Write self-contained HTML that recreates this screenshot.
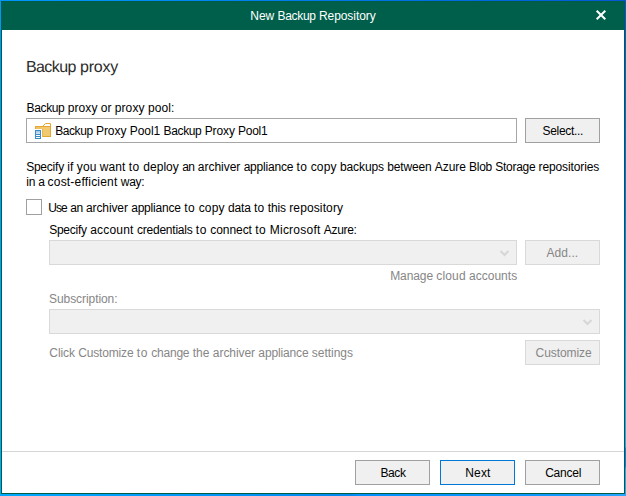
<!DOCTYPE html>
<html>
<head>
<meta charset="utf-8">
<title>New Backup Repository</title>
<style>
html,body{margin:0;padding:0;}
body{width:626px;height:496px;overflow:hidden;background:#0096ff;font-family:"Liberation Sans",sans-serif;position:relative;}
.abs{position:absolute;box-sizing:border-box;}
.t{position:absolute;white-space:nowrap;line-height:16px;height:16px;font-family:"Liberation Sans",sans-serif;}
.btn{position:absolute;box-sizing:border-box;background:#f0f0f0;border:1px solid #a0a0a0;}
.btn.dis{background:#f0f0f0;border-color:#d9d9d9;}
.combo{position:absolute;box-sizing:border-box;background:#f0f0f0;border:1px solid #d9d9d9;}
</style>
</head>
<body>
<!-- outer OS accent frame (desktop showing around window) -->
<div class="abs" style="left:0;top:0;width:626px;height:1px;background:linear-gradient(to right,#0096ff 0%,#0090f8 16%,#0070e8 64%,#0558d8 100%);"></div>
<div class="abs" style="left:0;top:1px;width:1px;height:495px;background:linear-gradient(to bottom,#0096ff 0%,#00aaff 100%);"></div>
<div class="abs" style="left:625px;top:1px;width:1px;height:495px;background:linear-gradient(to bottom,#0558d8 0%,#0558d8 8%,#0a6cf8 40%,#0090ff 57%,#25a5ff 81%,#25a5ff 90%,#0a78f0 90.5%,#0a78f0 94%,#28a6ff 94.5%,#28a6ff 100%);"></div>
<div class="abs" style="left:0;top:494px;width:626px;height:2px;background:linear-gradient(to right,#00a8ff 0%,#00a0ff 16%,#0088f0 56%,#0090ff 57%,#1098ff 90%,#28a6ff 100%);"></div>
<!-- window -->
<div class="abs" style="left:1px;top:1px;width:624px;height:493px;background:#005c42;"></div>
<div class="abs" style="left:2px;top:2px;width:622px;height:28px;background:#005f4b;"></div>
<div class="abs" style="left:2px;top:30px;width:622px;height:463px;background:#ffffff;"></div>
<!-- close X -->
<svg class="abs" style="left:594px;top:8px;" width="14" height="14" viewBox="0 0 14 14">
<path d="M2.7 2.7 L11.3 11.3 M11.3 2.7 L2.7 11.3" stroke="#ffffff" stroke-width="2" fill="none"/>
</svg>
<!-- proxy input -->
<div class="abs" style="left:26px;top:118px;width:491px;height:25px;background:#fff;border:1px solid #a6a6a6;"></div>
<!-- icon -->
<svg class="abs" style="left:34px;top:122px;" width="18" height="18" viewBox="0 0 18 18">
<defs><linearGradient id="scr" x1="0" y1="0" x2="0" y2="1"><stop offset="0" stop-color="#9cc6e8"/><stop offset="1" stop-color="#d6e7f5"/></linearGradient></defs>
<path d="M8.5 4.5 L11.5 1.5 H16.5 V4.5 Z" fill="#ffffff" stroke="#e2a634" stroke-width="1"/>
<rect x="1.5" y="4.5" width="15" height="10" fill="#f3c96f" stroke="#e2a634" stroke-width="1"/>
<rect x="2" y="5" width="6" height="2" fill="#f1c163"/>
<rect x="0" y="7" width="8" height="11" fill="#ffffff"/>
<rect x="8" y="7" width="1" height="8" fill="#e8b44c"/>
<rect x="1" y="8" width="6" height="9" fill="#3b8dc6"/>
<rect x="2" y="9" width="4" height="3" fill="url(#scr)"/>
<rect x="2" y="13" width="4" height="1" fill="#ffffff"/>
<rect x="2" y="15" width="4" height="1" fill="#ffffff"/>
</svg>
<!-- buttons -->
<div class="btn" style="left:525px;top:118px;width:75px;height:25px;"></div>
<div class="btn dis" style="left:525px;top:240px;width:75px;height:25px;"></div>
<div class="btn dis" style="left:525px;top:340px;width:75px;height:25px;"></div>
<!-- checkbox -->
<div class="abs" style="left:26px;top:199px;width:16px;height:16px;background:#fff;border:1px solid #a0a0a0;"></div>
<!-- combos -->
<div class="combo" style="left:49px;top:240px;width:468px;height:25px;"></div>
<svg class="abs" style="left:498px;top:248px;" width="13" height="10" viewBox="0 0 13 10"><path d="M2.5 3 L6.5 7 L10.5 3" stroke="#d6d6d6" stroke-width="2" fill="none"/></svg>
<div class="combo" style="left:49px;top:309px;width:551px;height:25px;"></div>
<svg class="abs" style="left:581px;top:317px;" width="13" height="10" viewBox="0 0 13 10"><path d="M2.5 3 L6.5 7 L10.5 3" stroke="#d6d6d6" stroke-width="2" fill="none"/></svg>
<!-- footer separator -->
<div class="abs" style="left:2px;top:451px;width:622px;height:1px;background:#d5d5d5;"></div>
<div class="btn" style="left:355px;top:460px;width:75px;height:25px;"></div>
<div class="btn" style="left:440px;top:460px;width:75px;height:25px;border-color:#0078d7;"></div>
<div class="btn" style="left:525px;top:460px;width:75px;height:25px;"></div>
<span class="t" style="left:250.35px;top:8.04px;font-size:12px;color:#ffffff;letter-spacing:-0.072px">New</span>
<span class="t" style="left:277.45px;top:8.04px;font-size:12px;color:#ffffff;letter-spacing:-0.305px">Backup</span>
<span class="t" style="left:318.95px;top:8.04px;font-size:12px;color:#ffffff;letter-spacing:-0.066px">Repository</span>
<span class="t" style="left:26.30px;top:59.00px;font-size:16px;color:#2b2b2b;letter-spacing:-0.612px;transform:skewX(0.05deg)">Backup</span>
<span class="t" style="left:80.40px;top:59.00px;font-size:16px;color:#2b2b2b;letter-spacing:-0.245px;transform:skewX(0.05deg)">proxy</span>
<span class="t" style="left:26.55px;top:99.84px;font-size:12px;color:#000000;letter-spacing:-0.355px">Backup</span>
<span class="t" style="left:67.75px;top:99.84px;font-size:12px;color:#000000;letter-spacing:0.071px">proxy</span>
<span class="t" style="left:100.75px;top:99.84px;font-size:12px;color:#000000;letter-spacing:-0.036px">or</span>
<span class="t" style="left:114.65px;top:99.84px;font-size:12px;color:#000000;letter-spacing:0.151px">proxy</span>
<span class="t" style="left:148.05px;top:99.84px;font-size:12px;color:#000000;letter-spacing:0.094px">pool:</span>
<span class="t" style="left:55.25px;top:122.84px;font-size:12px;color:#000000;letter-spacing:-0.439px">Backup</span>
<span class="t" style="left:95.95px;top:122.84px;font-size:12px;color:#000000;letter-spacing:-0.038px">Proxy</span>
<span class="t" style="left:129.75px;top:122.84px;font-size:12px;color:#000000;letter-spacing:-0.041px">Pool1</span>
<span class="t" style="left:163.55px;top:122.84px;font-size:12px;color:#000000;letter-spacing:-0.355px">Backup</span>
<span class="t" style="left:204.75px;top:122.84px;font-size:12px;color:#000000;letter-spacing:-0.137px">Proxy</span>
<span class="t" style="left:238.05px;top:122.84px;font-size:12px;color:#000000;letter-spacing:-0.281px">Pool1</span>
<span class="t" style="left:542.55px;top:122.84px;font-size:12px;color:#000000;letter-spacing:-0.307px">Select...</span>
<span class="t" style="left:26.15px;top:158.84px;font-size:12px;color:#000000;letter-spacing:-0.223px">Specify</span>
<span class="t" style="left:67.25px;top:158.84px;font-size:12px;color:#000000;letter-spacing:0.150px">if</span>
<span class="t" style="left:76.85px;top:158.84px;font-size:12px;color:#000000;letter-spacing:0.080px">you</span>
<span class="t" style="left:99.75px;top:158.84px;font-size:12px;color:#000000;letter-spacing:0.060px">want</span>
<span class="t" style="left:128.65px;top:158.84px;font-size:12px;color:#000000;letter-spacing:0.642px">to</span>
<span class="t" style="left:143.25px;top:158.84px;font-size:12px;color:#000000;letter-spacing:0.038px">deploy</span>
<span class="t" style="left:182.15px;top:158.84px;font-size:12px;color:#000000;letter-spacing:-0.530px">an</span>
<span class="t" style="left:197.75px;top:158.84px;font-size:12px;color:#000000;letter-spacing:-0.011px">archiver</span>
<span class="t" style="left:243.65px;top:158.84px;font-size:12px;color:#000000;letter-spacing:-0.197px">appliance</span>
<span class="t" style="left:296.55px;top:158.84px;font-size:12px;color:#000000;letter-spacing:0.392px">to</span>
<span class="t" style="left:310.65px;top:158.84px;font-size:12px;color:#000000;letter-spacing:0.160px">copy</span>
<span class="t" style="left:339.95px;top:158.84px;font-size:12px;color:#000000;letter-spacing:-0.100px">backups</span>
<span class="t" style="left:387.25px;top:158.84px;font-size:12px;color:#000000;letter-spacing:-0.154px">between</span>
<span class="t" style="left:434.85px;top:158.84px;font-size:12px;color:#000000;letter-spacing:-0.092px">Azure</span>
<span class="t" style="left:469.05px;top:158.84px;font-size:12px;color:#000000;letter-spacing:-0.258px">Blob</span>
<span class="t" style="left:495.35px;top:158.84px;font-size:12px;color:#000000;letter-spacing:-0.304px">Storage</span>
<span class="t" style="left:538.55px;top:158.84px;font-size:12px;color:#000000;letter-spacing:-0.119px">repositories</span>
<span class="t" style="left:26.35px;top:173.84px;font-size:12px;color:#000000;letter-spacing:-0.322px">in</span>
<span class="t" style="left:38.35px;top:173.84px;font-size:12px;color:#000000;letter-spacing:-0.787px">a</span>
<span class="t" style="left:47.55px;top:173.84px;font-size:12px;color:#000000;letter-spacing:0.203px">cost-efficient</span>
<span class="t" style="left:120.85px;top:173.84px;font-size:12px;color:#000000;letter-spacing:-0.347px">way:</span>
<span class="t" style="left:48.15px;top:199.84px;font-size:12px;color:#000000;letter-spacing:-0.848px">Use</span>
<span class="t" style="left:70.25px;top:199.84px;font-size:12px;color:#000000;letter-spacing:-0.480px">an</span>
<span class="t" style="left:85.95px;top:199.84px;font-size:12px;color:#000000;letter-spacing:-0.098px">archiver</span>
<span class="t" style="left:131.15px;top:199.84px;font-size:12px;color:#000000;letter-spacing:-0.186px">appliance</span>
<span class="t" style="left:184.15px;top:199.84px;font-size:12px;color:#000000;letter-spacing:0.592px">to</span>
<span class="t" style="left:198.65px;top:199.84px;font-size:12px;color:#000000;letter-spacing:0.185px">copy</span>
<span class="t" style="left:228.05px;top:199.84px;font-size:12px;color:#000000;letter-spacing:-0.165px">data</span>
<span class="t" style="left:254.05px;top:199.84px;font-size:12px;color:#000000;letter-spacing:0.142px">to</span>
<span class="t" style="left:267.65px;top:199.84px;font-size:12px;color:#000000;letter-spacing:-0.097px">this</span>
<span class="t" style="left:289.25px;top:199.84px;font-size:12px;color:#000000;letter-spacing:0.121px">repository</span>
<span class="t" style="left:49.15px;top:221.84px;font-size:12px;color:#000000;letter-spacing:-0.237px">Specify</span>
<span class="t" style="left:90.15px;top:221.84px;font-size:12px;color:#000000;letter-spacing:0.210px">account</span>
<span class="t" style="left:136.95px;top:221.84px;font-size:12px;color:#000000;letter-spacing:-0.221px">credentials</span>
<span class="t" style="left:195.85px;top:221.84px;font-size:12px;color:#000000;letter-spacing:0.592px">to</span>
<span class="t" style="left:210.35px;top:221.84px;font-size:12px;color:#000000;letter-spacing:-0.076px">connect</span>
<span class="t" style="left:255.15px;top:221.84px;font-size:12px;color:#000000;letter-spacing:0.642px">to</span>
<span class="t" style="left:269.75px;top:221.84px;font-size:12px;color:#000000;letter-spacing:0.235px">Microsoft</span>
<span class="t" style="left:323.85px;top:221.84px;font-size:12px;color:#000000;letter-spacing:-0.331px">Azure:</span>
<span class="t" style="left:546.55px;top:244.84px;font-size:12px;color:#868686;letter-spacing:0.040px">Add...</span>
<span class="t" style="left:390.15px;top:267.84px;font-size:12px;color:#868686;letter-spacing:-0.079px">Manage</span>
<span class="t" style="left:436.35px;top:267.84px;font-size:12px;color:#868686;letter-spacing:0.142px">cloud</span>
<span class="t" style="left:469.05px;top:267.84px;font-size:12px;color:#868686;letter-spacing:0.009px">accounts</span>
<span class="t" style="left:49.05px;top:290.84px;font-size:12px;color:#868686;letter-spacing:-0.075px">Subscription:</span>
<span class="t" style="left:49.35px;top:344.84px;font-size:12px;color:#868686;letter-spacing:-0.100px">Click</span>
<span class="t" style="left:78.15px;top:344.84px;font-size:12px;color:#868686;letter-spacing:-0.154px">Customize</span>
<span class="t" style="left:136.75px;top:344.84px;font-size:12px;color:#868686;letter-spacing:0.542px">to</span>
<span class="t" style="left:151.15px;top:344.84px;font-size:12px;color:#868686;letter-spacing:-0.196px">change</span>
<span class="t" style="left:192.65px;top:344.84px;font-size:12px;color:#868686;letter-spacing:0.071px">the</span>
<span class="t" style="left:212.85px;top:344.84px;font-size:12px;color:#868686;letter-spacing:-0.061px">archiver</span>
<span class="t" style="left:258.35px;top:344.84px;font-size:12px;color:#868686;letter-spacing:-0.142px">appliance</span>
<span class="t" style="left:311.75px;top:344.84px;font-size:12px;color:#868686;letter-spacing:-0.020px">settings</span>
<span class="t" style="left:535.55px;top:344.84px;font-size:12px;color:#868686;letter-spacing:-0.065px">Customize</span>
<span class="t" style="left:380.55px;top:464.84px;font-size:12px;color:#000000;letter-spacing:-0.447px">Back</span>
<span class="t" style="left:465.15px;top:464.84px;font-size:12px;color:#000000;letter-spacing:0.203px">Next</span>
<span class="t" style="left:545.15px;top:464.84px;font-size:12px;color:#000000;letter-spacing:-0.227px">Cancel</span>
</body>
</html>
